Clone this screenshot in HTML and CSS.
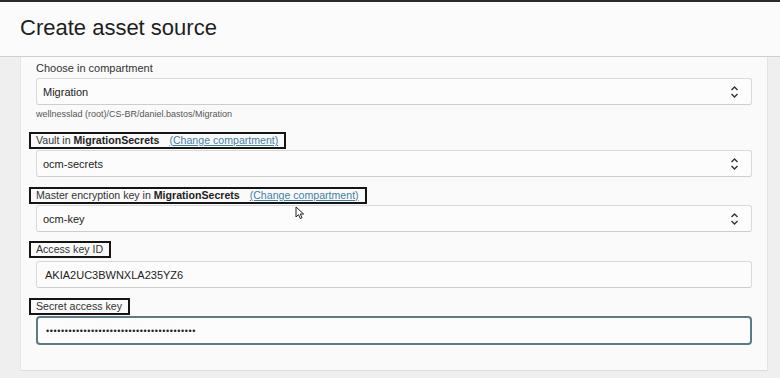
FILE: index.html
```html
<!DOCTYPE html>
<html lang="en">
<head>
  <meta charset="UTF-8" />
  <meta name="viewport" content="width=device-width, initial-scale=1.0" />
  <title>Create asset source</title>
  <link rel="stylesheet" href="styles.css">
</head>
<body>
  <header>
    <h1>Create asset source</h1>
  </header>

  <div class="main">
    <div class="panel">
      <div class="field">
        <div class="label">Choose in compartment</div>
        <div class="select">
          <span>Migration</span>
          <svg class="chevron" width="9" height="14" viewBox="0 0 9 14"><path d="M1.5 5 L4.5 2 L7.5 5 M1.5 9 L4.5 12 L7.5 9" fill="none" stroke="#333" stroke-width="1.4"/></svg>
        </div>
        <div class="helper">wellnesslad (root)/CS-BR/daniel.bastos/Migration</div>
      </div>

      <div class="field vault">
        <div class="label boxed">Vault in <b>MigrationSecrets</b> <a href="#">(Change compartment)</a></div>
        <div class="select">
          <span>ocm-secrets</span>
          <svg class="chevron" width="9" height="14" viewBox="0 0 9 14"><path d="M1.5 5 L4.5 2 L7.5 5 M1.5 9 L4.5 12 L7.5 9" fill="none" stroke="#333" stroke-width="1.4"/></svg>
        </div>
      </div>

      <div class="field master">
        <div class="label boxed">Master encryption key in <b>MigrationSecrets</b> <a href="#">(Change compartment)</a></div>
        <div class="select">
          <span>ocm-key</span>
          <svg class="chevron" width="9" height="14" viewBox="0 0 9 14"><path d="M1.5 5 L4.5 2 L7.5 5 M1.5 9 L4.5 12 L7.5 9" fill="none" stroke="#333" stroke-width="1.4"/></svg>
        </div>
        <svg class="pointer" width="10" height="14" viewBox="0 0 10 14"><path d="M1 1 L1 11 L3.5 8.6 L5.3 12.6 L7 11.8 L5.3 8 L8.6 8 Z" fill="#fff" stroke="#222" stroke-width="1"/></svg>
      </div>

      <div class="field access">
        <div class="label boxed">Access key ID</div>
        <input class="text" type="text" value="AKIA2UC3BWNXLA235YZ6" />
      </div>

      <div class="field secret">
        <div class="label boxed">Secret access key</div>
        <input class="text focused" type="text" value="••••••••••••••••••••••••••••••••••••••••" />
      </div>
    </div>
  </div>
</body>
</html>
```

FILE: styles.css
```css
body {
  margin: 0;
  background: #efefef;
  font-family: "Liberation Sans", Arial, sans-serif;
  color: #333;
}
header {
  height: 54px;
  background: #fbfbfb;
  border-top: 2px solid #2b2b2b;
  border-bottom: 1px solid #cfcfcf;
  display: flex;
  align-items: center;
  padding-left: 20px;
}
h1 {
  margin: 0;
  font-size: 22px;
  font-weight: normal;
  color: #1e1e1e;
  padding-bottom: 2px;
}
.main {
  display: flex;
  padding: 0 12px 8px 20px;
}
.panel {
  flex: 1;
  background: #fafafa;
  border-left: 1px solid #e6e6e6;
  border-bottom: 1px solid #dcdcdc;
  border-right: 1px solid #e4e4e4;
  padding: 5px 15px 25px 15px;
  position: relative;
}
.label {
  font-size: 11px;
  line-height: 13px;
  color: #333;
  margin-bottom: 3px;
}
.label b {
  color: #222;
}
.label a {
  color: #3f7fa6;
  margin-left: 7px;
}
.boxed {
  display: inline-block;
  font-size: 10.6px;
  border: 2px solid #151515;
  padding: 0 6px 0 5px;
  margin-left: -7px;
  margin-bottom: 1px;
  vertical-align: top;
}
.select, .text {
  box-sizing: border-box;
  display: flex;
  align-items: center;
  justify-content: space-between;
  width: 100%;
  height: 27px;
  background: #fcfcfc;
  border: 1px solid #d9d9d9;
  border-bottom-color: #cdcdcd;
  border-radius: 3px;
  padding: 0 12px 0 6px;
  font-size: 11px;
  color: #222;
}
.text {
  font-family: "Liberation Sans", Arial, sans-serif;
  padding-left: 8px;
  outline: none;
}
.chevron {
  display: block;
}
.helper {
  font-size: 9px;
  line-height: 12px;
  color: #555;
  margin-top: 3px;
}
.vault {
  margin-top: 12px;
}
.master {
  margin-top: 10px;
  position: relative;
}
.access {
  margin-top: 9px;
}
.access .boxed {
  margin-bottom: 3px;
}
.secret {
  margin-top: 10px;
}
.secret .boxed {
  margin-bottom: 0;
}
.focused {
  height: 29px;
  border: 2px solid #5b7b84;
  border-radius: 4px;
  padding-left: 8px;
  font-size: 9px;
  letter-spacing: 0.6px;
}
.pointer {
  position: absolute;
  left: 259px;
  top: 19px;
}
```
